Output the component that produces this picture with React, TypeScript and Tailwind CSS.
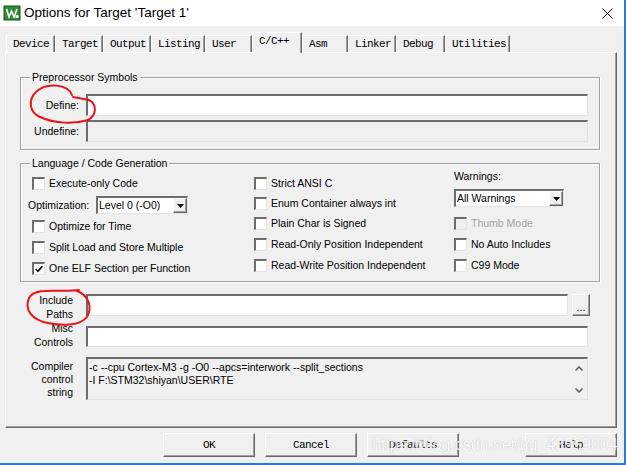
import React from "react";

const sunken =
  "border-t-2 border-l-2 border-t-[#6d6d6d] border-l-[#6d6d6d] border-r border-b border-r-[#e3e3e3] border-b-[#e3e3e3]";
const raised =
  "border-t border-l border-t-white border-l-white border-r border-b border-r-[#696969] border-b-[#696969] shadow-[inset_-1px_-1px_0_#a0a0a0]";
const etched = "border border-[#a0a0a0] shadow-[inset_1px_1px_0_#ffffff,1px_1px_0_#ffffff]";
const mono = "font-['Liberation_Mono',monospace] text-[11px] tracking-[-0.6px]";

const tabs = [
  { name: "Device", w: "w-[49px]" },
  { name: "Target", w: "w-[48px]" },
  { name: "Output", w: "w-[48px]" },
  { name: "Listing", w: "w-[54px]" },
  { name: "User", w: "w-[47px]" },
  { name: "C/C++", w: "w-[50px]", active: true },
  { name: "Asm", w: "w-[46px]" },
  { name: "Linker", w: "w-[48px]" },
  { name: "Debug", w: "w-[49px]" },
  { name: "Utilities", w: "w-[65px]" },
];

function Check({
  label,
  checked = false,
  disabled = false,
}: {
  label: string;
  checked?: boolean;
  disabled?: boolean;
}) {
  return (
    <div className="flex h-full items-center">
      <span
        className={`flex h-[13px] w-[13px] items-center justify-center ${sunken} ${
          disabled ? "bg-[#f0f0f0]" : "bg-white"
        }`}
      >
        {checked && (
          <svg width="8" height="8" viewBox="0 0 8 8">
            <polyline points="0.8,4 3,6.3 7.3,1.2" fill="none" stroke="#000" strokeWidth="1.7" />
          </svg>
        )}
      </span>
      <span className={`ml-[4px] whitespace-nowrap ${disabled ? "text-[#a0a0a0]" : ""}`}>{label}</span>
    </div>
  );
}

function Dropdown({ value, width }: { value: string; width: string }) {
  return (
    <div className={`flex h-[18px] bg-white ${width} ${sunken}`}>
      <span className="flex-1 whitespace-nowrap pl-[1px] leading-[15px]">{value}</span>
      <span className={`flex w-[14px] items-center justify-center bg-[#f0f0f0] ${raised}`}>
        <svg width="7" height="4" viewBox="0 0 7 4">
          <polygon points="0,0 7,0 3.5,4" fill="#000" />
        </svg>
      </span>
    </div>
  );
}

function Chevron({ up }: { up?: boolean }) {
  return (
    <svg width="8" height="5" viewBox="0 0 8 5">
      <polyline
        points={up ? "0.5,4.5 4,1 7.5,4.5" : "0.5,0.5 4,4 7.5,0.5"}
        fill="none"
        stroke="#5a5a5a"
        strokeWidth="1.5"
      />
    </svg>
  );
}

export default function App() {
  return (
    <div className="relative h-[465px] w-[626px] overflow-hidden border-r-2 border-b-2 border-[#2b7bd6] bg-[#f0f0f0] font-['Liberation_Sans',Arial,sans-serif] text-[10.5px] leading-[13px] text-black">
      {/* title bar */}
      <div className="flex h-[26px] items-center bg-white">
        <svg className="ml-[3px]" width="18" height="16" viewBox="0 0 18 16">
          <rect x="1" y="1" width="16" height="14" fill="#2f8a34" stroke="#1c4f1f" />
          <polyline points="3.5,4 6,12 8.5,6 11,12 14,4" fill="none" stroke="#fff" strokeWidth="1.6" />
          <rect x="12.5" y="10" width="3" height="3" fill="#fff" />
        </svg>
        <span className="ml-[3px] text-[13.5px] leading-[16px]">Options for Target 'Target 1'</span>
        <svg className="mr-[11px] ml-auto" width="11" height="11" viewBox="0 0 11 11">
          <path d="M0.5 0.5 L10.5 10.5 M10.5 0.5 L0.5 10.5" stroke="#000" strokeWidth="1" />
        </svg>
      </div>

      {/* tabs */}
      <div className={`flex h-[26px] items-end pl-[6px] ${mono}`}>
        {tabs.map((t) =>
          t.active ? (
            <div
              key={t.name}
              className={`relative z-10 -mb-px h-[21px] ${t.w} border-t border-l border-t-white border-l-white border-r border-r-[#696969] bg-[#f0f0f0] pt-[2px] pl-[6px] shadow-[inset_-1px_0_0_#a0a0a0]`}
            >
              {t.name}
            </div>
          ) : (
            <div
              key={t.name}
              className={`flex h-[17px] ${t.w} items-center border-t border-l border-t-white border-l-white border-r border-r-[#696969] pl-[6px] shadow-[inset_-1px_0_0_#a0a0a0]`}
            >
              {t.name}
            </div>
          )
        )}
      </div>

      {/* tab page */}
      <div className="ml-[5px] h-[376px] w-[612px] border border-t-white border-l-white border-r-[#696969] border-b-[#696969] shadow-[inset_-1px_-1px_0_#a0a0a0]">
        {/* Preprocessor Symbols */}
        <div className={`relative mt-[24px] ml-[14px] h-[73px] w-[580px] pt-[16px] ${etched}`}>
          <span className="absolute -top-[7px] left-[9px] bg-[#f0f0f0] px-[2px]">Preprocessor Symbols</span>
          <div className="flex items-center">
            <span className="w-[58px] text-right">Define:</span>
            <div className={`ml-[7px] h-[22px] w-[502px] bg-white ${sunken}`} />
          </div>
          <div className="mt-[4px] flex items-center">
            <span className="w-[58px] text-right">Undefine:</span>
            <div className={`ml-[7px] h-[22px] w-[502px] bg-[#f0f0f0] ${sunken}`} />
          </div>
        </div>

        {/* Language / Code Generation */}
        <div className={`relative mt-[13px] ml-[14px] flex h-[119px] w-[580px] ${etched}`}>
          <span className="absolute -top-[7px] left-[9px] bg-[#f0f0f0] px-[2px]">Language / Code Generation</span>

          <div className="ml-[7px] flex w-[226px] flex-col pt-[8px]">
            <div className="h-[22px] pl-[4px]">
              <Check label="Execute-only Code" />
            </div>
            <div className="flex h-[22px] items-center">
              <span className="w-[68px]">Optimization:</span>
              <Dropdown value="Level 0 (-O0)" width="w-[92px]" />
            </div>
            <div className="h-[21px] pl-[4px]">
              <Check label="Optimize for Time" />
            </div>
            <div className="h-[21px] pl-[4px]">
              <Check label="Split Load and Store Multiple" />
            </div>
            <div className="h-[21px] pl-[4px]">
              <Check label="One ELF Section per Function" checked />
            </div>
          </div>

          <div className="flex w-[200px] flex-col pt-[9px]">
            <div className="h-[20px]">
              <Check label="Strict ANSI C" />
            </div>
            <div className="h-[20px]">
              <Check label="Enum Container always int" />
            </div>
            <div className="h-[21px]">
              <Check label="Plain Char is Signed" />
            </div>
            <div className="h-[21px]">
              <Check label="Read-Only Position Independent" />
            </div>
            <div className="h-[21px]">
              <Check label="Read-Write Position Independent" />
            </div>
          </div>

          <div className="flex flex-col pt-[5px]">
            <span className="h-[14px] leading-[14px]">Warnings:</span>
            <div className="mt-[6px]">
              <Dropdown value="All Warnings" width="w-[110px]" />
            </div>
            <div className="mt-[6px] h-[21px]">
              <Check label="Thumb Mode" disabled />
            </div>
            <div className="h-[21px]">
              <Check label="No Auto Includes" />
            </div>
            <div className="h-[21px]">
              <Check label="C99 Mode" />
            </div>
          </div>
        </div>

        {/* Include Paths */}
        <div className="mt-[12px] flex h-[22px]">
          <div className="w-[67px] text-right leading-[13.5px]">
            Include
            <br />
            Paths
          </div>
          <div className={`ml-[13px] h-[22px] w-[482px] bg-white ${sunken}`} />
          <div className={`ml-[4px] flex h-[22px] w-[18px] items-end justify-center pb-[4px] leading-[8px] ${raised}`}>
            ...
          </div>
        </div>

        {/* Misc Controls */}
        <div className="mt-[10px] flex h-[21px]">
          <div className="-mt-[3px] flex h-[26px] w-[67px] flex-col items-end justify-end overflow-hidden leading-[14px]">
            <span>Misc</span>
            <span>Controls</span>
          </div>
          <div className={`ml-[13px] h-[21px] w-[502px] bg-white ${sunken}`} />
        </div>

        {/* Compiler control string */}
        <div className="mt-[10px] flex h-[43px]">
          <div className="w-[67px] pt-[3px] text-right leading-[13px]">
            Compiler
            <br />
            control
            <br />
            string
          </div>
          <div className={`ml-[13px] flex h-[43px] w-[502px] bg-[#f0f0f0] ${sunken}`}>
            <div className="flex-1 whitespace-nowrap pt-[2px] pl-[1px] leading-[13px]">
              <div>-c --cpu Cortex-M3 -g -O0 --apcs=interwork --split_sections</div>
              <div>-I F:\STM32\shiyan\USER\RTE</div>
            </div>
            <div className="flex w-[17px] flex-col items-center justify-between pt-[7px] pb-[6px]">
              <Chevron up />
              <Chevron />
            </div>
          </div>
        </div>
      </div>

      {/* dialog buttons */}
      <div className={`mt-[5px] flex h-[24px] ${mono}`}>
        <div className={`ml-[163px] flex w-[92px] items-center justify-center ${raised}`}>OK</div>
        <div className={`ml-[10px] flex w-[92px] items-center justify-center ${raised}`}>Cancel</div>
        <div className={`ml-[10px] flex w-[92px] items-center justify-center ${raised}`}>Defaults</div>
        <div className={`ml-[66px] flex w-[92px] items-center justify-center ${raised}`}>Help</div>
      </div>

      {/* hand-drawn red marks */}
      <svg className="pointer-events-none absolute top-0 left-0" width="626" height="465" viewBox="0 0 626 465">
        <path
          d="M72 95 C68 84 46 82 36 92 C28 100 29 112 40 117 C55 124 75 124 88 120 C97 115 97 104 89 100 L73 97"
          fill="none"
          stroke="#e8141c"
          strokeWidth="2"
          strokeLinecap="round"
        />
        <path
          d="M79 290 C60 293 36 286 29 298 C24 310 32 320 48 323 C62 326 80 326 87 317 C92 308 90 296 77 291"
          fill="none"
          stroke="#e8141c"
          strokeWidth="2"
          strokeLinecap="round"
        />
      </svg>

      {/* watermark */}
      <div className="pointer-events-none absolute top-[436px] left-[372px] text-[16px] leading-[18px] whitespace-nowrap text-white opacity-80 [text-shadow:0_0_1px_#9a9a9a]">
        https://blog.csdn.net/qq_43559004
      </div>
    </div>
  );
}
